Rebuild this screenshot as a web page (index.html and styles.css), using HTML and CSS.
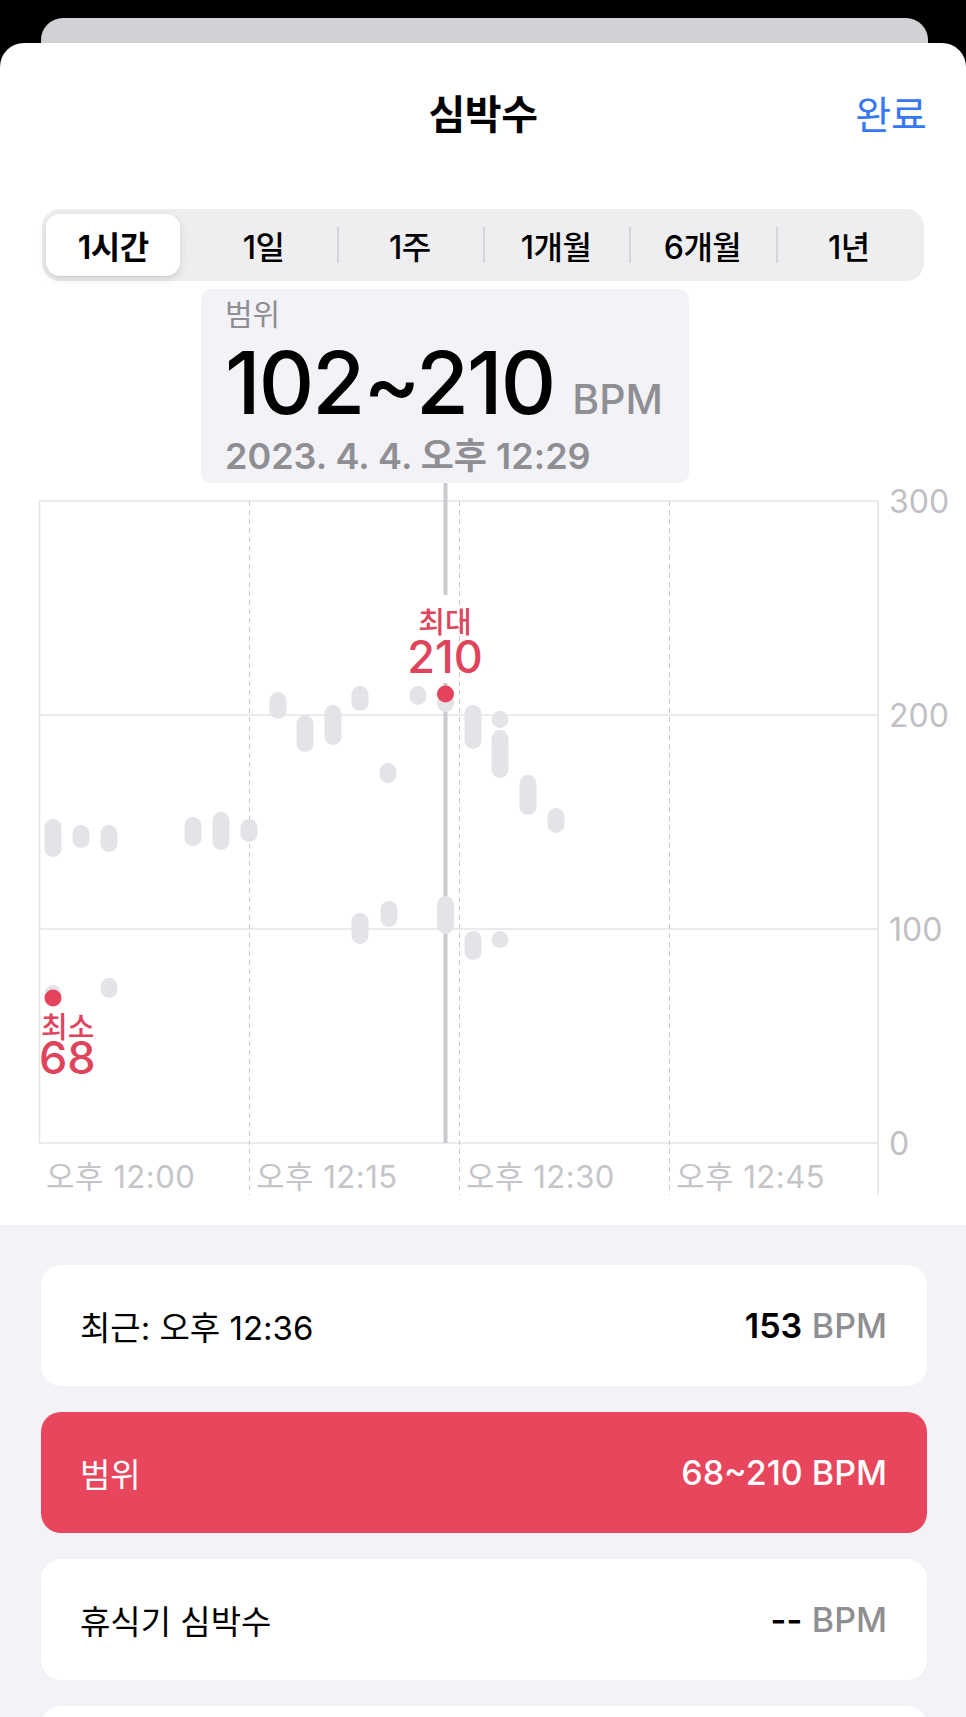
FILE: index.html
```html
<!DOCTYPE html>
<html lang="ko">
<head>
<meta charset="utf-8">
<title>심박수</title>
<link rel="stylesheet" href="styles.css">
</head>
<body>
<div class="backcard"></div>
<div class="sheet">
  <header class="header">
    <span></span>
    <h1 class="title">심박수</h1>
    <span class="done">완료</span>
  </header>
  <div class="segmented">
    <div class="seg selected">1시간</div>
    <div class="seg">1일</div>
    <div class="seg sep">1주</div>
    <div class="seg sep">1개월</div>
    <div class="seg sep">6개월</div>
    <div class="seg sep">1년</div>
  </div>
  <div class="chart">
    <svg class="plot" width="966" height="944" viewBox="0 0 966 944">
      <g class="grid">
        <line x1="39.5" y1="220" x2="878" y2="220"/>
        <line x1="39.5" y1="434" x2="878" y2="434"/>
        <line x1="39.5" y1="648" x2="878" y2="648"/>
        <line x1="39.5" y1="862" x2="878" y2="862"/>
        <line x1="39.5" y1="220" x2="39.5" y2="862"/>
        <line x1="878" y1="220" x2="878" y2="914"/>
      </g>
      <g class="dash">
        <line x1="249.5" y1="220" x2="249.5" y2="914"/>
        <line x1="459.5" y1="220" x2="459.5" y2="914"/>
        <line x1="669.5" y1="220" x2="669.5" y2="914"/>
      </g>
      <g class="ylab">
        <text x="889" y="232">300</text>
        <text x="889" y="446">200</text>
        <text x="889" y="660">100</text>
        <text x="889" y="874">0</text>
      </g>
      <g class="xlab">
        <text x="46" y="907">오후 12:00</text>
        <text x="256" y="907">오후 12:15</text>
        <text x="466" y="907">오후 12:30</text>
        <text x="676" y="907">오후 12:45</text>
      </g>
      <g class="cursor">
        <line x1="445.5" y1="202" x2="445.5" y2="314"/>
        <line x1="445.5" y1="402" x2="445.5" y2="862"/>
      </g>
      <g class="bars">
        <rect x="44.5" y="538" width="17" height="38" rx="8.5"/>
        <rect x="72.5" y="544" width="17" height="23" rx="8.5"/>
        <rect x="100.5" y="544" width="17" height="27" rx="8.5"/>
        <rect x="100.5" y="697" width="17" height="20" rx="8.5"/>
        <rect x="44.5" y="704" width="17" height="17" rx="8.5"/>
        <rect x="184.5" y="536" width="17" height="29" rx="8.5"/>
        <rect x="212.5" y="531" width="17" height="38" rx="8.5"/>
        <rect x="240.5" y="538" width="17" height="23" rx="8.5"/>
        <rect x="269.5" y="411" width="17" height="27" rx="8.5"/>
        <rect x="296.5" y="434" width="17" height="37" rx="8.5"/>
        <rect x="324.5" y="424" width="17" height="40" rx="8.5"/>
        <rect x="351.5" y="405" width="17" height="25" rx="8.5"/>
        <rect x="351.5" y="632" width="17" height="31" rx="8.5"/>
        <rect x="379.5" y="482" width="17" height="20" rx="8.5"/>
        <rect x="380.5" y="620" width="17" height="26" rx="8.5"/>
        <rect x="409.5" y="405" width="17" height="19" rx="8.5"/>
        <rect x="437" y="412" width="17" height="19" rx="8.5"/>
        <rect x="437" y="615" width="17" height="38" rx="8.5"/>
        <rect x="464.5" y="424" width="17" height="44" rx="8.5"/>
        <rect x="464.5" y="650" width="17" height="29" rx="8.5"/>
        <rect x="491.5" y="430" width="17" height="17" rx="8.5"/>
        <rect x="491.5" y="449" width="17" height="48" rx="8.5"/>
        <rect x="491.5" y="650" width="17" height="17" rx="8.5"/>
        <rect x="519.5" y="494" width="17" height="40" rx="8.5"/>
        <rect x="547.5" y="527" width="17" height="25" rx="8.5"/>
      </g>
      <g class="hi">
        <circle cx="445.5" cy="413" r="8.5"/>
        <circle cx="53" cy="717" r="8.5"/>
        <text class="hi-label" x="445" y="352" text-anchor="middle">최대</text>
        <text class="hi-value" x="445" y="392" text-anchor="middle">210</text>
        <text class="hi-label" x="41" y="757">최소</text>
        <text class="hi-value" x="39" y="793">68</text>
      </g>
    </svg>
    <div class="tooltip">
      <div class="tip-label">범위</div>
      <div class="tip-value"><span class="tip-num">102~210</span><span class="tip-unit">BPM</span></div>
      <div class="tip-date">2023. 4. 4. 오후 12:29</div>
    </div>
  </div>
  <section class="list">
    <div class="card">
      <span class="card-label">최근: 오후 12:36</span>
      <span class="card-value"><b>153</b> <span class="unit">BPM</span></span>
    </div>
    <div class="card card-red">
      <span class="card-label">범위</span>
      <span class="card-value">68~210 BPM</span>
    </div>
    <div class="card">
      <span class="card-label">휴식기 심박수</span>
      <span class="card-value"><b>--</b> <span class="unit">BPM</span></span>
    </div>
    <div class="card"></div>
  </section>
</div>
</body>
</html>
```

FILE: styles.css
```css
html, body {
  margin: 0;
  padding: 0;
}
body {
  background: #000;
  width: 966px;
  height: 1717px;
  overflow: hidden;
  font-family: "Inter", "Noto Sans CJK KR", sans-serif;
  color: #000;
}
.backcard {
  height: 25px;
  margin: 18px 38px 0 41px;
  background: #d1d1d6;
  border-radius: 22px 22px 0 0;
}
.sheet {
  background: #fff;
  border-radius: 24px 24px 0 0;
  overflow: hidden;
}
.header {
  height: 138px;
  display: grid;
  grid-template-columns: 1fr auto 1fr;
  align-items: center;
  padding: 0 39px;
}
.title {
  margin: 0;
  font-size: 40px;
  font-weight: 700;
  letter-spacing: -0.5px;
}
.done {
  justify-self: end;
  font-size: 39px;
  color: #3478f6;
  font-weight: 400;
}
.segmented {
  margin: 28px 42px 0;
  height: 72px;
  background: #eeeef0;
  border-radius: 18px;
  display: grid;
  grid-template-columns: repeat(6, 1fr);
  align-items: center;
  padding: 0 2px;
}
.seg {
  height: 62px;
  display: flex;
  align-items: center;
  justify-content: center;
  font-size: 32px;
  font-weight: 500;
  letter-spacing: -0.5px;
  position: relative;
}
.seg.sep::before {
  content: "";
  position: absolute;
  left: 0;
  top: 13px;
  height: 36px;
  width: 2px;
  background: #d6d6da;
}
.seg.selected {
  background: #fff;
  border-radius: 14px;
  margin: 0 10px 0 2px;
  box-shadow: 0 3px 8px rgba(0,0,0,0.12), 0 1px 1px rgba(0,0,0,0.04);
  font-weight: 600;
}
.chart {
  position: relative;
  height: 944px;
}
.plot {
  display: block;
}
.grid line {
  stroke: #e4e4e9;
  stroke-width: 1.5;
}
.dash line {
  stroke: #cacace;
  stroke-width: 1;
  stroke-dasharray: 5 4;
}
.cursor line {
  stroke: #c9c9ce;
  stroke-width: 4;
}
.bars rect {
  fill: #e3e3e8;
}
.hi circle {
  fill: #e5435b;
}
.ylab text {
  font-family: "Inter", sans-serif;
  font-size: 32px;
  fill: #bfbfc4;
}
.xlab text {
  font-family: "Inter", "Noto Sans CJK KR", sans-serif;
  font-size: 31px;
  letter-spacing: 0.5px;
  fill: #c4c4c9;
}
.hi-label {
  font-family: "Noto Sans CJK KR", sans-serif;
  font-size: 29px;
  font-weight: 500;
  fill: #e0445c;
}
.hi-value {
  font-family: "Inter", sans-serif;
  font-size: 45px;
  font-weight: 500;
  fill: #e0445c;
}
.tooltip {
  position: absolute;
  top: 8px;
  left: 201px;
  width: 488px;
  height: 194px;
  box-sizing: border-box;
  background: #f2f2f7;
  border-radius: 10px;
  padding: 8px 24px 0;
}
.tip-label {
  font-size: 30px;
  line-height: 34px;
  color: #8e8e93;
}
.tip-value {
  margin-top: 8px;
  font-size: 86px;
  line-height: 88px;
  height: 88px;
  white-space: nowrap;
}
.tip-num {
  font-weight: 500;
  letter-spacing: -2px;
}
.tip-unit {
  font-size: 41px;
  line-height: 1;
  font-weight: 500;
  color: #8e8e93;
  margin-left: 18px;
}
.tip-date {
  margin-top: 9px;
  font-size: 36px;
  line-height: 40px;
  font-weight: 600;
  color: #8e8e93;
  white-space: nowrap;
}
.list {
  background: #f2f2f7;
  padding: 40px 39px 0 41px;
  display: flex;
  flex-direction: column;
  gap: 26px;
  height: 600px;
}
.card {
  height: 121px;
  flex: none;
  background: #fff;
  border-radius: 20px;
  display: flex;
  align-items: center;
  justify-content: space-between;
  padding: 0 40px 0 39px;
  font-size: 33px;
}
.card-label {
  font-weight: 400;
}
.card-value {
  font-size: 34px;
}
.card-value b {
  font-weight: 600;
}
.card-value .unit {
  color: #8e8e93;
  font-weight: 500;
}
.card-red {
  background: #e8465c;
  color: #fff;
}
.card-red .card-value {
  font-weight: 500;
}
```
